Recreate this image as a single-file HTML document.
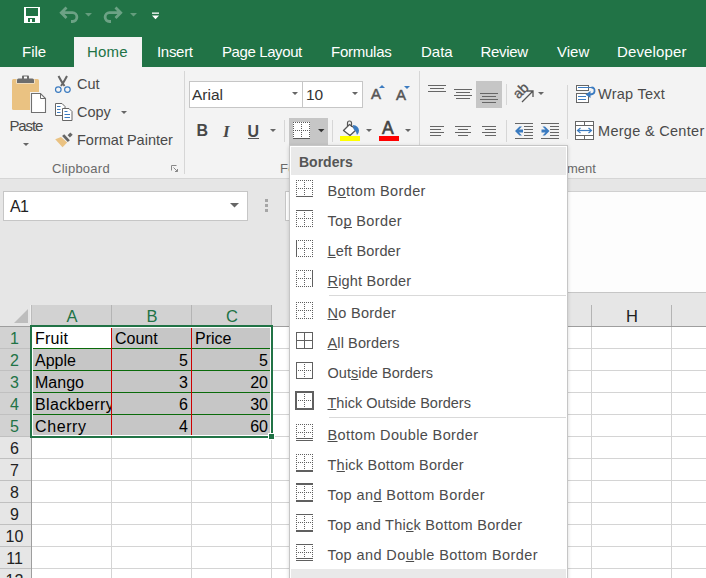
<!DOCTYPE html>
<html><head><meta charset="utf-8">
<style>
*{margin:0;padding:0;box-sizing:border-box}
html,body{width:706px;height:578px;overflow:hidden;background:#e6e6e6;font-family:"Liberation Sans",sans-serif}
.a{position:absolute}
.t{position:absolute;white-space:nowrap;line-height:1}
#title{left:0;top:0;width:706px;height:67px;background:#217346}
.tab{color:#fff;font-size:15px;top:43.5px}
#hometab{left:74px;top:37px;width:68px;height:30px;background:#f3f3f3}
#ribbon{left:0;top:67px;width:706px;height:112px;background:#f3f3f3;border-bottom:1px solid #d5d5d5}
.rt{color:#4a4a4a;font-size:14.5px}
.lbl{color:#6a6a6a;font-size:13px;letter-spacing:.25px}
.sep{position:absolute;width:1px;background:#d6d6d6}
#grid{left:0;top:305px}
.hd{top:308px;font-size:16.5px;width:80px;text-align:center}
.rn{left:0;width:29px;text-align:center;font-size:16px}
.cl{font-size:16px;color:#000}
.menu{left:290px;top:145px;width:278px;height:440px;background:#fff;border:1px solid #c6c6c6;box-shadow:-1px 1px 3px rgba(0,0,0,.12)}
.mi{color:#4c4c4c;font-size:14.5px;left:327.5px;letter-spacing:0px}
.mi u{text-decoration:underline;text-underline-offset:1px;text-decoration-skip-ink:none;text-decoration-thickness:1px}
</style></head><body>
<div id="title" class="a"></div>
<div id="hometab" class="a"></div>
<div class="t tab" style="left:22px">File</div>
<div class="t tab" style="left:87px;color:#217346;letter-spacing:.2px">Home</div>
<div class="t tab" style="left:157px;letter-spacing:-.3px">Insert</div>
<div class="t tab" style="left:222px;letter-spacing:-.4px">Page Layout</div>
<div class="t tab" style="left:331px;letter-spacing:-.25px">Formulas</div>
<div class="t tab" style="left:421px">Data</div>
<div class="t tab" style="left:480.5px;letter-spacing:-.3px">Review</div>
<div class="t tab" style="left:557px">View</div>
<div class="t tab" style="left:617px;letter-spacing:.15px">Developer</div>

<div id="ribbon" class="a"></div>
<!-- title bar icons -->
<svg class="a" style="left:0;top:0" width="170" height="30">
<g shape-rendering="crispEdges">
<rect x="24" y="7" width="16" height="16" rx="1" fill="#fff"/>
<rect x="26" y="8" width="12" height="8" fill="#217346"/>
<rect x="28" y="18" width="7" height="4" fill="#217346"/>
<rect x="30" y="19" width="2" height="3" fill="#fff"/>
</g>

<g opacity=".34"><path d="M66.5 7.5 L61.3 12.7 L66.5 17.9 M62.5 12.7 H72.5 a4.4 4.4 0 0 1 0 8.8 H71" fill="none" stroke="#fff" stroke-width="2.8"/></g><g opacity=".34"><path d="M115.5 7.5 L120.7 12.7 L115.5 17.9 M119.5 12.7 H109.5 a4.4 4.4 0 0 0 0 8.8 H111" fill="none" stroke="#fff" stroke-width="2.8"/></g>
<path d="M85 13 h7 l-3.5 3.5z M130 13 h7 l-3.5 3.5z" fill="#fff" fill-opacity=".3"/>
<rect x="152" y="12.5" width="7" height="1.3" fill="#fff"/>
<path d="M152 15.5 h7 l-3.5 3.8z" fill="#fff"/>
</svg>

<!-- ribbon icons -->
<svg class="a" style="left:0;top:67px" width="706" height="111" viewBox="0 67 706 111">
<!-- paste -->
<rect x="12" y="79" width="27" height="31" rx="1.5" fill="#eac282"/>
<path d="M17 83 v-3 q0 -1.5 1.5 -1.5 h3.5 v-2 q0 -1 1 -1 h5 q1 0 1 1 v2 h3.5 q1.5 0 1.5 1.5 v3z" fill="#6d6d6d" stroke="#f3f3f3" stroke-width="1.2" paint-order="stroke"/>
<rect x="24" y="76.5" width="3" height="2" fill="#fff"/>
<rect x="30" y="92" width="17" height="21.5" fill="#f3f3f3"/>
<path d="M31.5 93.5 h9 l5 5 v14 h-14z" fill="#fff" stroke="#707070" stroke-width="1.1"/>
<path d="M40.5 93.5 v5 h5" fill="none" stroke="#6d6d6d" stroke-width="1"/>
<path d="M23 143 h6 l-3 3z" fill="#666"/>
<!-- cut -->
<circle cx="58.3" cy="89.6" r="2.8" fill="none" stroke="#3b7bc0" stroke-width="1.2"/>
<circle cx="67.4" cy="89.6" r="2.8" fill="none" stroke="#3b7bc0" stroke-width="1.2"/>
<!-- copy -->
<path d="M55.5 103.5 h6.5 l3 3 v9 h-9.5z" fill="#fff" stroke="#666"/>
<path d="M62.5 108.5 h6.5 l3 3 v9 h-9.5z" fill="#fff" stroke="#666"/>
<path d="M57 106.5 h3.5 M57 109.5 h3.5 M57 112.5 h3.5" stroke="#3b7bc0"/>
<path d="M64.5 111.5 h3 M64.5 114.5 h5.5 M64.5 117.5 h5.5" stroke="#3b7bc0"/>
<path d="M58.5 76 Q61 81 64.5 86 M67 76 Q64.5 81 61 86" stroke="#666" stroke-width="2" fill="none"/>
<path d="M121 111 h6 l-3 3z" fill="#666"/>
<!-- format painter -->
<path d="M55.2 139.2 L61 137 L67.2 142.4 L62.5 147.2z" fill="#eac282"/>
<path d="M62.1 136 L64.2 134.3 L69.9 140.2 L67.8 141.9z" fill="#666"/>
<path d="M67.6 135.2 L70.3 132.4 L72.7 134.7 L69.9 137.5z" fill="#666"/>
<!-- launcher -->
<path d="M171.5 165.5 h5 M171.5 165.5 v5" stroke="#888" fill="none"/>
<path d="M173.5 167.5 l4 4 M177.5 169 v2.5 h-2.5" stroke="#888" fill="none"/>
<!-- separators -->
<g fill="#d6d6d6" shape-rendering="crispEdges">
<rect x="184" y="71" width="1" height="103"/>
<rect x="419" y="71" width="1" height="103"/>
<rect x="284" y="120" width="1" height="22"/>
<rect x="332" y="120" width="1" height="22"/>
<rect x="506" y="84" width="1" height="21"/>
<rect x="506" y="120" width="1" height="22"/>
<rect x="567" y="85" width="1" height="54"/>
</g>
<!-- font boxes -->
<g shape-rendering="crispEdges">
<rect x="189.5" y="81.5" width="113" height="26" fill="#fff" stroke="#c6c6c6"/>
<rect x="302.5" y="81.5" width="60" height="26" fill="#fff" stroke="#c6c6c6"/>
</g>
<path d="M292 92 h6 l-3 3z M352 92 h6 l-3 3z" fill="#666"/>
<!-- grow/shrink triangles -->
<path d="M379 88 h6 l-3 -3z" fill="#3b7bc0"/>
<path d="M404 86 h6 l-3 3z" fill="#3b7bc0"/>
<!-- U dropdown -->
<path d="M270 129 h6 l-3 3z" fill="#666"/>
<!-- borders button -->
<rect x="289" y="118" width="39" height="27" fill="#c6c6c6" shape-rendering="crispEdges"/>
<rect x="293" y="122" width="17" height="17" fill="#fff" shape-rendering="crispEdges"/><g fill="#5a5a5a" shape-rendering="crispEdges"><rect x="293" y="122" width="1" height="1"/><rect x="293" y="130" width="1" height="1"/><rect x="295" y="122" width="1" height="1"/><rect x="295" y="130" width="1" height="1"/><rect x="297" y="122" width="1" height="1"/><rect x="297" y="130" width="1" height="1"/><rect x="299" y="122" width="1" height="1"/><rect x="299" y="130" width="1" height="1"/><rect x="301" y="122" width="1" height="1"/><rect x="301" y="130" width="1" height="1"/><rect x="303" y="122" width="1" height="1"/><rect x="303" y="130" width="1" height="1"/><rect x="305" y="122" width="1" height="1"/><rect x="305" y="130" width="1" height="1"/><rect x="307" y="122" width="1" height="1"/><rect x="307" y="130" width="1" height="1"/><rect x="309" y="122" width="1" height="1"/><rect x="309" y="130" width="1" height="1"/><rect x="293" y="124" width="1" height="1"/><rect x="301" y="124" width="1" height="1"/><rect x="309" y="124" width="1" height="1"/><rect x="293" y="126" width="1" height="1"/><rect x="301" y="126" width="1" height="1"/><rect x="309" y="126" width="1" height="1"/><rect x="293" y="128" width="1" height="1"/><rect x="301" y="128" width="1" height="1"/><rect x="309" y="128" width="1" height="1"/><rect x="293" y="132" width="1" height="1"/><rect x="301" y="132" width="1" height="1"/><rect x="309" y="132" width="1" height="1"/><rect x="293" y="134" width="1" height="1"/><rect x="301" y="134" width="1" height="1"/><rect x="309" y="134" width="1" height="1"/><rect x="293" y="136" width="1" height="1"/><rect x="301" y="136" width="1" height="1"/><rect x="309" y="136" width="1" height="1"/><rect x="293" y="138" width="17" height="1"/></g>
<path d="M318 129 h6.5 l-3.25 3.25z" fill="#333"/>
<!-- fill color -->
<path d="M343.5 130.5 L349.5 124.5 L356.5 129.5 L350 135.5z" fill="#fff" stroke="#555" stroke-width="1.3" stroke-linejoin="round"/>
<path d="M347.5 126 v-3 a2 2 0 0 1 4 0 v4" fill="none" stroke="#555" stroke-width="1.2"/>
<path d="M353 125 q5.5 0.5 6 5.5 q0 3 -2 4.5 q-1 -4 -3.5 -6z" fill="#3b7bc0"/>
<rect x="340" y="136" width="20" height="5" fill="#ffff00" shape-rendering="crispEdges"/>
<path d="M366 129 h6 l-3 3z" fill="#666"/>
<!-- font color -->
<rect x="379" y="136" width="20" height="5" fill="#ff0000" shape-rendering="crispEdges"/>
<path d="M405 129 h6 l-3 3z" fill="#666"/>
<!-- alignment -->
<g fill="#666" shape-rendering="crispEdges">
<rect x="428" y="85" width="18" height="1"/><rect x="430" y="88" width="14" height="1"/><rect x="428" y="91" width="18" height="1"/>
<rect x="454" y="89" width="18" height="1"/><rect x="456" y="92" width="14" height="1"/><rect x="454" y="95" width="18" height="1"/><rect x="456" y="98" width="14" height="1"/>
</g>
<rect x="476" y="81" width="26" height="27" fill="#c6c6c6" shape-rendering="crispEdges"/>
<g fill="#666" shape-rendering="crispEdges">
<rect x="480" y="93" width="18" height="1"/><rect x="482" y="96" width="14" height="1"/><rect x="480" y="99" width="18" height="1"/><rect x="482" y="102" width="14" height="1"/>
<rect x="430" y="126" width="14" height="1"/><rect x="430" y="129" width="11" height="1"/><rect x="430" y="132" width="14" height="1"/><rect x="430" y="135" width="11" height="1"/>
<rect x="455" y="126" width="16" height="1"/><rect x="458" y="129" width="10" height="1"/><rect x="455" y="132" width="16" height="1"/><rect x="458" y="135" width="10" height="1"/>
<rect x="482" y="126" width="14" height="1"/><rect x="485" y="129" width="11" height="1"/><rect x="482" y="132" width="14" height="1"/><rect x="485" y="135" width="11" height="1"/>
<rect x="515" y="123" width="18" height="1"/><rect x="524" y="126" width="9" height="1"/><rect x="524" y="129" width="9" height="1"/><rect x="524" y="132" width="9" height="1"/><rect x="524" y="135" width="9" height="1"/><rect x="515" y="138" width="18" height="1"/>
<rect x="541" y="123" width="18" height="1"/><rect x="550" y="126" width="9" height="1"/><rect x="550" y="129" width="9" height="1"/><rect x="550" y="132" width="9" height="1"/><rect x="550" y="135" width="9" height="1"/><rect x="541" y="138" width="18" height="1"/>
</g>
<path d="M515 131 l4.5 -4.5 h2.5 l-3 3 h4 v3 h-4 l3 3 h-2.5z" fill="#3b7bc0"/>
<path d="M549.5 131 l-4.5 -4.5 h-2.5 l3 3 h-4 v3 h4 l-3 3 h2.5z" fill="#3b7bc0"/>
<!-- orientation -->
<text x="0" y="0" transform="translate(518.5 99.5) rotate(-45)" font-family="Liberation Sans" font-size="14" fill="#555" stroke="#555" stroke-width=".35">ab</text>
<path d="M522 102 L532.5 91.5 M527 91 h6 v6" stroke="#555" stroke-width="1.3" fill="none"/>
<path d="M538 92 h6 l-3 3z" fill="#666"/>
<!-- wrap text -->
<rect x="576.5" y="85.5" width="12" height="5" fill="#fff" stroke="#666"/>
<rect x="576.5" y="93.5" width="12" height="9" fill="#fff" stroke="#666"/>
<path d="M578 87.5 h14" stroke="#3b7bc0"/>
<path d="M578 96.5 h8 M578 99.5 h8" stroke="#3b7bc0"/>
<path d="M591.5 87.5 q3.5 0 3 4 q-0.5 3 -5 3" fill="none" stroke="#3b7bc0" stroke-width="1.8"/>
<path d="M585.5 94.5 L590.5 91 L590.5 98z" fill="#3b7bc0"/>
<!-- merge -->
<g fill="none" stroke="#666" shape-rendering="crispEdges">
<rect x="575.5" y="121.5" width="18" height="18" fill="#fff"/>
<path d="M575 125.5 h19 M575 135.5 h19 M584.5 121 v4.5 M584.5 135 v4.5"/>
</g>
<path d="M578 130.5 h13" stroke="#3b7bc0" stroke-width="1.2"/>
<path d="M580.5 128 l-3 2.5 l3 2.5 M588.5 128 l3 2.5 l-3 2.5" fill="none" stroke="#3b7bc0" stroke-width="1.2"/>
</svg>

<!-- ribbon text -->
<div class="t rt" style="left:9.5px;top:117.5px;font-size:15px;letter-spacing:-1.15px">Paste</div>
<div class="t rt" style="left:77px;top:77px">Cut</div>
<div class="t rt" style="left:77px;top:105px">Copy</div>
<div class="t rt" style="left:77px;top:133px">Format Painter</div>
<div class="t lbl" style="left:52px;top:162px">Clipboard</div>
<div class="t lbl" style="left:280px;top:162px">Font</div>
<div class="t lbl" style="left:538px;top:162px;letter-spacing:0">Alignment</div>
<div class="t" style="left:192px;top:86.5px;font-size:15.5px;color:#333">Arial</div>
<div class="t" style="left:306px;top:86.5px;font-size:15.5px;color:#333">10</div>
<div class="t" style="left:371px;top:86px;font-size:15px;color:#555;-webkit-text-stroke:.5px #555">A</div>
<div class="t" style="left:396px;top:87px;font-size:15px;color:#555;-webkit-text-stroke:.5px #555">A</div>
<div class="t" style="left:196.5px;top:123px;font-size:16px;font-weight:bold;color:#484848">B</div>
<div class="t" style="left:223px;top:122.5px;font-size:17px;font-weight:bold;font-style:italic;color:#484848;font-family:'Liberation Serif',serif">I</div>
<div class="t" style="left:247.5px;top:124px;font-size:16px;font-weight:bold;color:#484848">U</div>
<div class="a" style="left:248px;top:138px;width:11px;height:1px;background:#555"></div>
<div class="t" style="left:382px;top:119.5px;font-size:17.5px;color:#444;-webkit-text-stroke:.6px #444">A</div>
<div class="t rt" style="left:598px;top:87px;letter-spacing:.25px">Wrap Text</div>
<div class="t rt" style="left:598px;top:124px;letter-spacing:.3px">Merge &amp; Center</div>
<div class="a" style="left:568px;top:191px;width:138px;height:102px;background:#fdfdfd;border-bottom:1px solid #c6c6c6;border-top:1px solid #d0d0d0"></div>
<svg class="a" style="left:260px;top:195px" width="12" height="20"><g fill="#a6a6a6"><rect x="5" y="4" width="3" height="3"/><rect x="5" y="9" width="3" height="3"/><rect x="5" y="14" width="3" height="3"/></g></svg>
<svg class="a" style="z-index:2;left:228px;top:200px" width="14" height="10"><path d="M2 3 h9 l-4.5 4.5z" fill="#666"/></svg>


<!-- name box -->
<div class="a" style="left:3px;top:191px;width:245px;height:30px;background:#fff;border:1px solid #c6c6c6"></div>
<div class="t" style="left:10px;top:199px;font-size:16px;letter-spacing:-.6px;color:#222">A1</div>
<div class="a" style="left:285px;top:191px;width:10px;height:30px;background:#fff;border:1px solid #c6c6c6"></div>

<!-- sheet -->
<svg id="grid" class="a" width="706" height="273" viewBox="0 305 706 273" shape-rendering="crispEdges">
<rect x="0" y="305" width="706" height="21" fill="#e6e6e6"/>
<rect x="32" y="305" width="240" height="21" fill="#d2d2d2"/>
<rect x="0" y="327" width="31" height="251" fill="#e6e6e6"/>
<rect x="0" y="327" width="31" height="110" fill="#d2d2d2"/>
<rect x="32" y="327" width="674" height="251" fill="#ffffff"/>
<rect x="32" y="327" width="240" height="110" fill="#c6c6c6"/>
<rect x="32" y="327" width="79" height="21" fill="#ffffff"/>
<rect x="32" y="348" width="674" height="1" fill="#d4d4d4"/>
<rect x="0" y="348" width="31" height="1" fill="#c0c0c0"/>
<rect x="32" y="370" width="674" height="1" fill="#d4d4d4"/>
<rect x="0" y="370" width="31" height="1" fill="#c0c0c0"/>
<rect x="32" y="392" width="674" height="1" fill="#d4d4d4"/>
<rect x="0" y="392" width="31" height="1" fill="#c0c0c0"/>
<rect x="32" y="414" width="674" height="1" fill="#d4d4d4"/>
<rect x="0" y="414" width="31" height="1" fill="#c0c0c0"/>
<rect x="32" y="436" width="674" height="1" fill="#d4d4d4"/>
<rect x="0" y="436" width="31" height="1" fill="#c0c0c0"/>
<rect x="32" y="458" width="674" height="1" fill="#d4d4d4"/>
<rect x="0" y="458" width="31" height="1" fill="#c0c0c0"/>
<rect x="32" y="480" width="674" height="1" fill="#d4d4d4"/>
<rect x="0" y="480" width="31" height="1" fill="#c0c0c0"/>
<rect x="32" y="502" width="674" height="1" fill="#d4d4d4"/>
<rect x="0" y="502" width="31" height="1" fill="#c0c0c0"/>
<rect x="32" y="524" width="674" height="1" fill="#d4d4d4"/>
<rect x="0" y="524" width="31" height="1" fill="#c0c0c0"/>
<rect x="32" y="546" width="674" height="1" fill="#d4d4d4"/>
<rect x="0" y="546" width="31" height="1" fill="#c0c0c0"/>
<rect x="32" y="568" width="674" height="1" fill="#d4d4d4"/>
<rect x="0" y="568" width="31" height="1" fill="#c0c0c0"/>
<rect x="111" y="327" width="1" height="251" fill="#d4d4d4"/>
<rect x="111" y="305" width="1" height="21" fill="#b4b4b4"/>
<rect x="191" y="327" width="1" height="251" fill="#d4d4d4"/>
<rect x="191" y="305" width="1" height="21" fill="#b4b4b4"/>
<rect x="271" y="327" width="1" height="251" fill="#d4d4d4"/>
<rect x="271" y="305" width="1" height="21" fill="#b4b4b4"/>
<rect x="351" y="327" width="1" height="251" fill="#d4d4d4"/>
<rect x="351" y="305" width="1" height="21" fill="#b4b4b4"/>
<rect x="431" y="327" width="1" height="251" fill="#d4d4d4"/>
<rect x="431" y="305" width="1" height="21" fill="#b4b4b4"/>
<rect x="511" y="327" width="1" height="251" fill="#d4d4d4"/>
<rect x="511" y="305" width="1" height="21" fill="#b4b4b4"/>
<rect x="591" y="327" width="1" height="251" fill="#d4d4d4"/>
<rect x="591" y="305" width="1" height="21" fill="#b4b4b4"/>
<rect x="671" y="327" width="1" height="251" fill="#d4d4d4"/>
<rect x="671" y="305" width="1" height="21" fill="#b4b4b4"/>
<rect x="751" y="327" width="1" height="251" fill="#d4d4d4"/>
<rect x="751" y="305" width="1" height="21" fill="#b4b4b4"/>
<rect x="0" y="326" width="706" height="1" fill="#9e9e9e"/>
<rect x="31" y="305" width="1" height="21" fill="#bcbcbc"/>
<rect x="30" y="305" width="1" height="21" fill="#f0f0f0"/>
<rect x="31" y="326" width="1" height="252" fill="#9e9e9e"/>
<polygon points="14,323 28,309 28,323" fill="#bdbdbd" shape-rendering="geometricPrecision"/>
<rect x="32" y="348" width="240" height="1" fill="#0a6a0a"/>
<rect x="32" y="370" width="240" height="1" fill="#0a6a0a"/>
<rect x="32" y="392" width="240" height="1" fill="#0a6a0a"/>
<rect x="32" y="414" width="240" height="1" fill="#0a6a0a"/>
<rect x="111" y="327" width="1" height="110" fill="#cc0000"/>
<rect x="191" y="327" width="1" height="110" fill="#cc0000"/>
<rect x="32" y="327" width="1" height="109" fill="#fff"/>
<rect x="32" y="435" width="236" height="1" fill="#fff"/>
<rect x="270" y="327" width="1" height="106" fill="#fff"/>
<rect x="32" y="327" width="239" height="1" fill="#fff"/>
<rect x="268" y="433" width="7" height="7" fill="#fff"/>
<rect x="30" y="325" width="243" height="2" fill="#217346"/>
<rect x="30" y="325" width="2" height="113" fill="#217346"/>
<rect x="271" y="325" width="2" height="108" fill="#217346"/>
<rect x="30" y="436" width="238" height="2" fill="#217346"/>
<rect x="269" y="434" width="5" height="5" fill="#217346"/>

</svg>

<!-- cells -->
<div class="t hd" style="left:32px;color:#217346">A</div>
<div class="t hd" style="left:112px;color:#217346">B</div>
<div class="t hd" style="left:192px;color:#217346">C</div>
<div class="t hd" style="left:592px;color:#222">H</div>
<div class="t rn" style="top:331px;color:#217346">1</div>
<div class="t rn" style="top:353px;color:#217346">2</div>
<div class="t rn" style="top:375px;color:#217346">3</div>
<div class="t rn" style="top:397px;color:#217346">4</div>
<div class="t rn" style="top:419px;color:#217346">5</div>
<div class="t rn" style="top:441px;color:#222">6</div>
<div class="t rn" style="top:463px;color:#222">7</div>
<div class="t rn" style="top:485px;color:#222">8</div>
<div class="t rn" style="top:507px;color:#222">9</div>
<div class="t rn" style="top:529px;color:#222">10</div>
<div class="t rn" style="top:551px;color:#222">11</div>
<div class="t rn" style="top:573px;color:#222">12</div>
<div class="t cl" style="top:331px;left:35px;letter-spacing:.25px">Fruit</div>
<div class="t cl" style="top:331px;left:115px">Count</div>
<div class="t cl" style="top:331px;left:195px">Price</div>
<div class="t cl" style="top:353px;left:35px">Apple</div>
<div class="t cl" style="top:353px;left:111px;width:77px;text-align:right">5</div>
<div class="t cl" style="top:353px;left:191px;width:77px;text-align:right">5</div>
<div class="t cl" style="top:375px;left:35px">Mango</div>
<div class="t cl" style="top:375px;left:111px;width:77px;text-align:right">3</div>
<div class="t cl" style="top:375px;left:191px;width:77px;text-align:right">20</div>
<div class="a" style="top:392px;left:33px;width:78px;height:22px;overflow:hidden"><div class="t cl" style="top:5px;left:2px;letter-spacing:.35px">Blackberry</div></div>
<div class="t cl" style="top:397px;left:111px;width:77px;text-align:right">6</div>
<div class="t cl" style="top:397px;left:191px;width:77px;text-align:right">30</div>
<div class="t cl" style="top:419px;left:35px;letter-spacing:.6px">Cherry</div>
<div class="t cl" style="top:419px;left:111px;width:77px;text-align:right">4</div>
<div class="t cl" style="top:419px;left:191px;width:77px;text-align:right">60</div>
<!-- menu -->
<div class="a" style="left:289px;top:145px;width:279px;height:440px;box-shadow:0 1px 4px rgba(0,0,0,.16)"></div>
<svg class="a" style="left:0;top:0" width="706" height="578" shape-rendering="crispEdges">
<rect x="289" y="145" width="279" height="440" fill="#c6c6c6"/>
<rect x="290" y="146" width="277" height="440" fill="#ffffff"/>
<rect x="291" y="147" width="275" height="28" fill="#e9e9e9"/>
<rect x="291" y="569" width="275" height="20" fill="#e9e9e9"/>
<g fill="#606060"><rect x="296" y="180" width="1" height="1"/><rect x="298" y="180" width="1" height="1"/><rect x="300" y="180" width="1" height="1"/><rect x="302" y="180" width="1" height="1"/><rect x="304" y="180" width="1" height="1"/><rect x="306" y="180" width="1" height="1"/><rect x="308" y="180" width="1" height="1"/><rect x="310" y="180" width="1" height="1"/><rect x="312" y="180" width="1" height="1"/><rect x="296" y="188" width="1" height="1"/><rect x="298" y="188" width="1" height="1"/><rect x="300" y="188" width="1" height="1"/><rect x="302" y="188" width="1" height="1"/><rect x="304" y="188" width="1" height="1"/><rect x="306" y="188" width="1" height="1"/><rect x="308" y="188" width="1" height="1"/><rect x="310" y="188" width="1" height="1"/><rect x="312" y="188" width="1" height="1"/><rect x="296" y="180" width="1" height="1"/><rect x="296" y="182" width="1" height="1"/><rect x="296" y="184" width="1" height="1"/><rect x="296" y="186" width="1" height="1"/><rect x="296" y="188" width="1" height="1"/><rect x="296" y="190" width="1" height="1"/><rect x="296" y="192" width="1" height="1"/><rect x="296" y="194" width="1" height="1"/><rect x="296" y="196" width="1" height="1"/><rect x="304" y="180" width="1" height="1"/><rect x="304" y="182" width="1" height="1"/><rect x="304" y="184" width="1" height="1"/><rect x="304" y="186" width="1" height="1"/><rect x="304" y="188" width="1" height="1"/><rect x="304" y="190" width="1" height="1"/><rect x="304" y="192" width="1" height="1"/><rect x="304" y="194" width="1" height="1"/><rect x="304" y="196" width="1" height="1"/><rect x="312" y="180" width="1" height="1"/><rect x="312" y="182" width="1" height="1"/><rect x="312" y="184" width="1" height="1"/><rect x="312" y="186" width="1" height="1"/><rect x="312" y="188" width="1" height="1"/><rect x="312" y="190" width="1" height="1"/><rect x="312" y="192" width="1" height="1"/><rect x="312" y="194" width="1" height="1"/><rect x="312" y="196" width="1" height="1"/><rect x="296" y="196" width="17" height="1"/></g>
<g fill="#606060"><rect x="296" y="210" width="17" height="1"/><rect x="296" y="218" width="1" height="1"/><rect x="298" y="218" width="1" height="1"/><rect x="300" y="218" width="1" height="1"/><rect x="302" y="218" width="1" height="1"/><rect x="304" y="218" width="1" height="1"/><rect x="306" y="218" width="1" height="1"/><rect x="308" y="218" width="1" height="1"/><rect x="310" y="218" width="1" height="1"/><rect x="312" y="218" width="1" height="1"/><rect x="296" y="210" width="1" height="1"/><rect x="296" y="212" width="1" height="1"/><rect x="296" y="214" width="1" height="1"/><rect x="296" y="216" width="1" height="1"/><rect x="296" y="218" width="1" height="1"/><rect x="296" y="220" width="1" height="1"/><rect x="296" y="222" width="1" height="1"/><rect x="296" y="224" width="1" height="1"/><rect x="296" y="226" width="1" height="1"/><rect x="304" y="210" width="1" height="1"/><rect x="304" y="212" width="1" height="1"/><rect x="304" y="214" width="1" height="1"/><rect x="304" y="216" width="1" height="1"/><rect x="304" y="218" width="1" height="1"/><rect x="304" y="220" width="1" height="1"/><rect x="304" y="222" width="1" height="1"/><rect x="304" y="224" width="1" height="1"/><rect x="304" y="226" width="1" height="1"/><rect x="312" y="210" width="1" height="1"/><rect x="312" y="212" width="1" height="1"/><rect x="312" y="214" width="1" height="1"/><rect x="312" y="216" width="1" height="1"/><rect x="312" y="218" width="1" height="1"/><rect x="312" y="220" width="1" height="1"/><rect x="312" y="222" width="1" height="1"/><rect x="312" y="224" width="1" height="1"/><rect x="312" y="226" width="1" height="1"/><rect x="296" y="226" width="1" height="1"/><rect x="298" y="226" width="1" height="1"/><rect x="300" y="226" width="1" height="1"/><rect x="302" y="226" width="1" height="1"/><rect x="304" y="226" width="1" height="1"/><rect x="306" y="226" width="1" height="1"/><rect x="308" y="226" width="1" height="1"/><rect x="310" y="226" width="1" height="1"/><rect x="312" y="226" width="1" height="1"/></g>
<g fill="#606060"><rect x="296" y="240" width="1" height="1"/><rect x="298" y="240" width="1" height="1"/><rect x="300" y="240" width="1" height="1"/><rect x="302" y="240" width="1" height="1"/><rect x="304" y="240" width="1" height="1"/><rect x="306" y="240" width="1" height="1"/><rect x="308" y="240" width="1" height="1"/><rect x="310" y="240" width="1" height="1"/><rect x="312" y="240" width="1" height="1"/><rect x="296" y="248" width="1" height="1"/><rect x="298" y="248" width="1" height="1"/><rect x="300" y="248" width="1" height="1"/><rect x="302" y="248" width="1" height="1"/><rect x="304" y="248" width="1" height="1"/><rect x="306" y="248" width="1" height="1"/><rect x="308" y="248" width="1" height="1"/><rect x="310" y="248" width="1" height="1"/><rect x="312" y="248" width="1" height="1"/><rect x="296" y="240" width="1" height="17"/><rect x="304" y="240" width="1" height="1"/><rect x="304" y="242" width="1" height="1"/><rect x="304" y="244" width="1" height="1"/><rect x="304" y="246" width="1" height="1"/><rect x="304" y="248" width="1" height="1"/><rect x="304" y="250" width="1" height="1"/><rect x="304" y="252" width="1" height="1"/><rect x="304" y="254" width="1" height="1"/><rect x="304" y="256" width="1" height="1"/><rect x="312" y="240" width="1" height="1"/><rect x="312" y="242" width="1" height="1"/><rect x="312" y="244" width="1" height="1"/><rect x="312" y="246" width="1" height="1"/><rect x="312" y="248" width="1" height="1"/><rect x="312" y="250" width="1" height="1"/><rect x="312" y="252" width="1" height="1"/><rect x="312" y="254" width="1" height="1"/><rect x="312" y="256" width="1" height="1"/><rect x="296" y="256" width="1" height="1"/><rect x="298" y="256" width="1" height="1"/><rect x="300" y="256" width="1" height="1"/><rect x="302" y="256" width="1" height="1"/><rect x="304" y="256" width="1" height="1"/><rect x="306" y="256" width="1" height="1"/><rect x="308" y="256" width="1" height="1"/><rect x="310" y="256" width="1" height="1"/><rect x="312" y="256" width="1" height="1"/></g>
<g fill="#606060"><rect x="296" y="270" width="1" height="1"/><rect x="298" y="270" width="1" height="1"/><rect x="300" y="270" width="1" height="1"/><rect x="302" y="270" width="1" height="1"/><rect x="304" y="270" width="1" height="1"/><rect x="306" y="270" width="1" height="1"/><rect x="308" y="270" width="1" height="1"/><rect x="310" y="270" width="1" height="1"/><rect x="312" y="270" width="1" height="1"/><rect x="296" y="278" width="1" height="1"/><rect x="298" y="278" width="1" height="1"/><rect x="300" y="278" width="1" height="1"/><rect x="302" y="278" width="1" height="1"/><rect x="304" y="278" width="1" height="1"/><rect x="306" y="278" width="1" height="1"/><rect x="308" y="278" width="1" height="1"/><rect x="310" y="278" width="1" height="1"/><rect x="312" y="278" width="1" height="1"/><rect x="296" y="270" width="1" height="1"/><rect x="296" y="272" width="1" height="1"/><rect x="296" y="274" width="1" height="1"/><rect x="296" y="276" width="1" height="1"/><rect x="296" y="278" width="1" height="1"/><rect x="296" y="280" width="1" height="1"/><rect x="296" y="282" width="1" height="1"/><rect x="296" y="284" width="1" height="1"/><rect x="296" y="286" width="1" height="1"/><rect x="304" y="270" width="1" height="1"/><rect x="304" y="272" width="1" height="1"/><rect x="304" y="274" width="1" height="1"/><rect x="304" y="276" width="1" height="1"/><rect x="304" y="278" width="1" height="1"/><rect x="304" y="280" width="1" height="1"/><rect x="304" y="282" width="1" height="1"/><rect x="304" y="284" width="1" height="1"/><rect x="304" y="286" width="1" height="1"/><rect x="312" y="270" width="1" height="17"/><rect x="296" y="286" width="1" height="1"/><rect x="298" y="286" width="1" height="1"/><rect x="300" y="286" width="1" height="1"/><rect x="302" y="286" width="1" height="1"/><rect x="304" y="286" width="1" height="1"/><rect x="306" y="286" width="1" height="1"/><rect x="308" y="286" width="1" height="1"/><rect x="310" y="286" width="1" height="1"/><rect x="312" y="286" width="1" height="1"/></g>
<rect x="329" y="295" width="237" height="1" fill="#d9d9d9"/>
<g fill="#606060"><rect x="296" y="302" width="1" height="1"/><rect x="298" y="302" width="1" height="1"/><rect x="300" y="302" width="1" height="1"/><rect x="302" y="302" width="1" height="1"/><rect x="304" y="302" width="1" height="1"/><rect x="306" y="302" width="1" height="1"/><rect x="308" y="302" width="1" height="1"/><rect x="310" y="302" width="1" height="1"/><rect x="312" y="302" width="1" height="1"/><rect x="296" y="310" width="1" height="1"/><rect x="298" y="310" width="1" height="1"/><rect x="300" y="310" width="1" height="1"/><rect x="302" y="310" width="1" height="1"/><rect x="304" y="310" width="1" height="1"/><rect x="306" y="310" width="1" height="1"/><rect x="308" y="310" width="1" height="1"/><rect x="310" y="310" width="1" height="1"/><rect x="312" y="310" width="1" height="1"/><rect x="296" y="302" width="1" height="1"/><rect x="296" y="304" width="1" height="1"/><rect x="296" y="306" width="1" height="1"/><rect x="296" y="308" width="1" height="1"/><rect x="296" y="310" width="1" height="1"/><rect x="296" y="312" width="1" height="1"/><rect x="296" y="314" width="1" height="1"/><rect x="296" y="316" width="1" height="1"/><rect x="296" y="318" width="1" height="1"/><rect x="304" y="302" width="1" height="1"/><rect x="304" y="304" width="1" height="1"/><rect x="304" y="306" width="1" height="1"/><rect x="304" y="308" width="1" height="1"/><rect x="304" y="310" width="1" height="1"/><rect x="304" y="312" width="1" height="1"/><rect x="304" y="314" width="1" height="1"/><rect x="304" y="316" width="1" height="1"/><rect x="304" y="318" width="1" height="1"/><rect x="312" y="302" width="1" height="1"/><rect x="312" y="304" width="1" height="1"/><rect x="312" y="306" width="1" height="1"/><rect x="312" y="308" width="1" height="1"/><rect x="312" y="310" width="1" height="1"/><rect x="312" y="312" width="1" height="1"/><rect x="312" y="314" width="1" height="1"/><rect x="312" y="316" width="1" height="1"/><rect x="312" y="318" width="1" height="1"/><rect x="296" y="318" width="1" height="1"/><rect x="298" y="318" width="1" height="1"/><rect x="300" y="318" width="1" height="1"/><rect x="302" y="318" width="1" height="1"/><rect x="304" y="318" width="1" height="1"/><rect x="306" y="318" width="1" height="1"/><rect x="308" y="318" width="1" height="1"/><rect x="310" y="318" width="1" height="1"/><rect x="312" y="318" width="1" height="1"/></g>
<g fill="#606060"><rect x="296" y="332" width="17" height="1"/><rect x="296" y="332" width="1" height="17"/><rect x="296" y="340" width="17" height="1"/><rect x="304" y="332" width="1" height="17"/><rect x="296" y="348" width="17" height="1"/><rect x="312" y="332" width="1" height="17"/></g>
<g fill="#606060"><rect x="296" y="362" width="17" height="1"/><rect x="296" y="378" width="17" height="1"/><rect x="296" y="362" width="1" height="17"/><rect x="312" y="362" width="1" height="17"/><rect x="298" y="370" width="1" height="1"/><rect x="300" y="370" width="1" height="1"/><rect x="302" y="370" width="1" height="1"/><rect x="304" y="370" width="1" height="1"/><rect x="306" y="370" width="1" height="1"/><rect x="308" y="370" width="1" height="1"/><rect x="310" y="370" width="1" height="1"/><rect x="304" y="364" width="1" height="1"/><rect x="304" y="366" width="1" height="1"/><rect x="304" y="368" width="1" height="1"/><rect x="304" y="370" width="1" height="1"/><rect x="304" y="372" width="1" height="1"/><rect x="304" y="374" width="1" height="1"/><rect x="304" y="376" width="1" height="1"/></g>
<g fill="#606060"><rect x="295" y="391" width="19" height="2"/><rect x="295" y="408" width="19" height="2"/><rect x="295" y="391" width="2" height="19"/><rect x="312" y="391" width="2" height="19"/><rect x="298" y="400" width="1" height="1"/><rect x="300" y="400" width="1" height="1"/><rect x="302" y="400" width="1" height="1"/><rect x="304" y="400" width="1" height="1"/><rect x="306" y="400" width="1" height="1"/><rect x="308" y="400" width="1" height="1"/><rect x="310" y="400" width="1" height="1"/><rect x="304" y="394" width="1" height="1"/><rect x="304" y="396" width="1" height="1"/><rect x="304" y="398" width="1" height="1"/><rect x="304" y="400" width="1" height="1"/><rect x="304" y="402" width="1" height="1"/><rect x="304" y="404" width="1" height="1"/><rect x="304" y="406" width="1" height="1"/></g>
<rect x="329" y="417" width="237" height="1" fill="#d9d9d9"/>
<g fill="#606060"><rect x="296" y="424" width="1" height="1"/><rect x="298" y="424" width="1" height="1"/><rect x="300" y="424" width="1" height="1"/><rect x="302" y="424" width="1" height="1"/><rect x="304" y="424" width="1" height="1"/><rect x="306" y="424" width="1" height="1"/><rect x="308" y="424" width="1" height="1"/><rect x="310" y="424" width="1" height="1"/><rect x="312" y="424" width="1" height="1"/><rect x="296" y="432" width="1" height="1"/><rect x="298" y="432" width="1" height="1"/><rect x="300" y="432" width="1" height="1"/><rect x="302" y="432" width="1" height="1"/><rect x="304" y="432" width="1" height="1"/><rect x="306" y="432" width="1" height="1"/><rect x="308" y="432" width="1" height="1"/><rect x="310" y="432" width="1" height="1"/><rect x="312" y="432" width="1" height="1"/><rect x="296" y="424" width="1" height="1"/><rect x="296" y="426" width="1" height="1"/><rect x="296" y="428" width="1" height="1"/><rect x="296" y="430" width="1" height="1"/><rect x="296" y="432" width="1" height="1"/><rect x="296" y="434" width="1" height="1"/><rect x="296" y="436" width="1" height="1"/><rect x="304" y="424" width="1" height="1"/><rect x="304" y="426" width="1" height="1"/><rect x="304" y="428" width="1" height="1"/><rect x="304" y="430" width="1" height="1"/><rect x="304" y="432" width="1" height="1"/><rect x="304" y="434" width="1" height="1"/><rect x="304" y="436" width="1" height="1"/><rect x="312" y="424" width="1" height="1"/><rect x="312" y="426" width="1" height="1"/><rect x="312" y="428" width="1" height="1"/><rect x="312" y="430" width="1" height="1"/><rect x="312" y="432" width="1" height="1"/><rect x="312" y="434" width="1" height="1"/><rect x="312" y="436" width="1" height="1"/><rect x="296" y="438" width="17" height="1"/><rect x="296" y="440" width="17" height="1"/></g>
<g fill="#606060"><rect x="296" y="454" width="1" height="1"/><rect x="298" y="454" width="1" height="1"/><rect x="300" y="454" width="1" height="1"/><rect x="302" y="454" width="1" height="1"/><rect x="304" y="454" width="1" height="1"/><rect x="306" y="454" width="1" height="1"/><rect x="308" y="454" width="1" height="1"/><rect x="310" y="454" width="1" height="1"/><rect x="312" y="454" width="1" height="1"/><rect x="296" y="462" width="1" height="1"/><rect x="298" y="462" width="1" height="1"/><rect x="300" y="462" width="1" height="1"/><rect x="302" y="462" width="1" height="1"/><rect x="304" y="462" width="1" height="1"/><rect x="306" y="462" width="1" height="1"/><rect x="308" y="462" width="1" height="1"/><rect x="310" y="462" width="1" height="1"/><rect x="312" y="462" width="1" height="1"/><rect x="296" y="454" width="1" height="1"/><rect x="296" y="456" width="1" height="1"/><rect x="296" y="458" width="1" height="1"/><rect x="296" y="460" width="1" height="1"/><rect x="296" y="462" width="1" height="1"/><rect x="296" y="464" width="1" height="1"/><rect x="296" y="466" width="1" height="1"/><rect x="296" y="468" width="1" height="1"/><rect x="304" y="454" width="1" height="1"/><rect x="304" y="456" width="1" height="1"/><rect x="304" y="458" width="1" height="1"/><rect x="304" y="460" width="1" height="1"/><rect x="304" y="462" width="1" height="1"/><rect x="304" y="464" width="1" height="1"/><rect x="304" y="466" width="1" height="1"/><rect x="304" y="468" width="1" height="1"/><rect x="312" y="454" width="1" height="1"/><rect x="312" y="456" width="1" height="1"/><rect x="312" y="458" width="1" height="1"/><rect x="312" y="460" width="1" height="1"/><rect x="312" y="462" width="1" height="1"/><rect x="312" y="464" width="1" height="1"/><rect x="312" y="466" width="1" height="1"/><rect x="312" y="468" width="1" height="1"/><rect x="296" y="470" width="17" height="2"/></g>
<g fill="#606060"><rect x="296" y="483" width="17" height="2"/><rect x="296" y="492" width="1" height="1"/><rect x="298" y="492" width="1" height="1"/><rect x="300" y="492" width="1" height="1"/><rect x="302" y="492" width="1" height="1"/><rect x="304" y="492" width="1" height="1"/><rect x="306" y="492" width="1" height="1"/><rect x="308" y="492" width="1" height="1"/><rect x="310" y="492" width="1" height="1"/><rect x="312" y="492" width="1" height="1"/><rect x="296" y="484" width="1" height="1"/><rect x="296" y="486" width="1" height="1"/><rect x="296" y="488" width="1" height="1"/><rect x="296" y="490" width="1" height="1"/><rect x="296" y="492" width="1" height="1"/><rect x="296" y="494" width="1" height="1"/><rect x="296" y="496" width="1" height="1"/><rect x="296" y="498" width="1" height="1"/><rect x="304" y="484" width="1" height="1"/><rect x="304" y="486" width="1" height="1"/><rect x="304" y="488" width="1" height="1"/><rect x="304" y="490" width="1" height="1"/><rect x="304" y="492" width="1" height="1"/><rect x="304" y="494" width="1" height="1"/><rect x="304" y="496" width="1" height="1"/><rect x="304" y="498" width="1" height="1"/><rect x="312" y="484" width="1" height="1"/><rect x="312" y="486" width="1" height="1"/><rect x="312" y="488" width="1" height="1"/><rect x="312" y="490" width="1" height="1"/><rect x="312" y="492" width="1" height="1"/><rect x="312" y="494" width="1" height="1"/><rect x="312" y="496" width="1" height="1"/><rect x="312" y="498" width="1" height="1"/><rect x="296" y="500" width="17" height="2"/></g>
<g fill="#606060"><rect x="296" y="514" width="17" height="1"/><rect x="296" y="522" width="1" height="1"/><rect x="298" y="522" width="1" height="1"/><rect x="300" y="522" width="1" height="1"/><rect x="302" y="522" width="1" height="1"/><rect x="304" y="522" width="1" height="1"/><rect x="306" y="522" width="1" height="1"/><rect x="308" y="522" width="1" height="1"/><rect x="310" y="522" width="1" height="1"/><rect x="312" y="522" width="1" height="1"/><rect x="296" y="514" width="1" height="1"/><rect x="296" y="516" width="1" height="1"/><rect x="296" y="518" width="1" height="1"/><rect x="296" y="520" width="1" height="1"/><rect x="296" y="522" width="1" height="1"/><rect x="296" y="524" width="1" height="1"/><rect x="296" y="526" width="1" height="1"/><rect x="296" y="528" width="1" height="1"/><rect x="304" y="514" width="1" height="1"/><rect x="304" y="516" width="1" height="1"/><rect x="304" y="518" width="1" height="1"/><rect x="304" y="520" width="1" height="1"/><rect x="304" y="522" width="1" height="1"/><rect x="304" y="524" width="1" height="1"/><rect x="304" y="526" width="1" height="1"/><rect x="304" y="528" width="1" height="1"/><rect x="312" y="514" width="1" height="1"/><rect x="312" y="516" width="1" height="1"/><rect x="312" y="518" width="1" height="1"/><rect x="312" y="520" width="1" height="1"/><rect x="312" y="522" width="1" height="1"/><rect x="312" y="524" width="1" height="1"/><rect x="312" y="526" width="1" height="1"/><rect x="312" y="528" width="1" height="1"/><rect x="296" y="530" width="17" height="2"/></g>
<g fill="#606060"><rect x="296" y="544" width="17" height="1"/><rect x="296" y="552" width="1" height="1"/><rect x="298" y="552" width="1" height="1"/><rect x="300" y="552" width="1" height="1"/><rect x="302" y="552" width="1" height="1"/><rect x="304" y="552" width="1" height="1"/><rect x="306" y="552" width="1" height="1"/><rect x="308" y="552" width="1" height="1"/><rect x="310" y="552" width="1" height="1"/><rect x="312" y="552" width="1" height="1"/><rect x="296" y="544" width="1" height="1"/><rect x="296" y="546" width="1" height="1"/><rect x="296" y="548" width="1" height="1"/><rect x="296" y="550" width="1" height="1"/><rect x="296" y="552" width="1" height="1"/><rect x="296" y="554" width="1" height="1"/><rect x="296" y="556" width="1" height="1"/><rect x="304" y="544" width="1" height="1"/><rect x="304" y="546" width="1" height="1"/><rect x="304" y="548" width="1" height="1"/><rect x="304" y="550" width="1" height="1"/><rect x="304" y="552" width="1" height="1"/><rect x="304" y="554" width="1" height="1"/><rect x="304" y="556" width="1" height="1"/><rect x="312" y="544" width="1" height="1"/><rect x="312" y="546" width="1" height="1"/><rect x="312" y="548" width="1" height="1"/><rect x="312" y="550" width="1" height="1"/><rect x="312" y="552" width="1" height="1"/><rect x="312" y="554" width="1" height="1"/><rect x="312" y="556" width="1" height="1"/><rect x="296" y="558" width="17" height="1"/><rect x="296" y="560" width="17" height="1"/></g>
</svg>
<div class="t" style="left:299px;top:155px;font-size:14px;font-weight:bold;color:#555">Borders</div>
<div class="t mi" style="top:183.5px;letter-spacing:0.367px">B<u>o</u>ttom Border</div>
<div class="t mi" style="top:213.5px;letter-spacing:0.356px">To<u>p</u> Border</div>
<div class="t mi" style="top:243.5px;letter-spacing:0.140px"><u>L</u>eft Border</div>
<div class="t mi" style="top:273.5px;letter-spacing:0.191px"><u>R</u>ight Border</div>
<div class="t mi" style="top:305.5px;letter-spacing:0.287px"><u>N</u>o Border</div>
<div class="t mi" style="top:335.5px;letter-spacing:0.110px"><u>A</u>ll Borders</div>
<div class="t mi" style="top:365.5px;letter-spacing:0.057px">Out<u>s</u>ide Borders</div>
<div class="t mi" style="top:395.5px;letter-spacing:0.000px"><u>T</u>hick Outside Borders</div>
<div class="t mi" style="top:427.5px;letter-spacing:0.368px"><u>B</u>ottom Double Border</div>
<div class="t mi" style="top:457.5px;letter-spacing:0.222px">T<u>h</u>ick Bottom Border</div>
<div class="t mi" style="top:487.5px;letter-spacing:0.400px">Top an<u>d</u> Bottom Border</div>
<div class="t mi" style="top:517.5px;letter-spacing:0.273px">Top and Thi<u>c</u>k Bottom Border</div>
<div class="t mi" style="top:547.5px;letter-spacing:0.404px">Top and Do<u>u</u>ble Bottom Border</div>

</body></html>
